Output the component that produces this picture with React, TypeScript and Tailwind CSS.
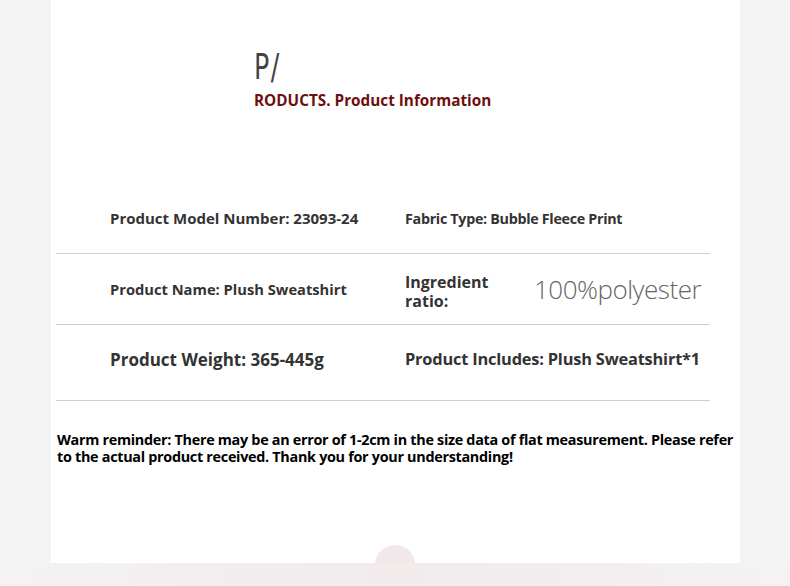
import React from "react";

const rowText = "font-bold text-[#333333]";

export default function App() {
  return (
    <div className="relative h-[586px] w-[790px] overflow-hidden bg-gradient-to-r from-[#f5f4f4] via-[#f3eeee] to-[#f5f4f4] font-['Open_Sans',sans-serif]">
      <div className="ml-[51px] h-[563px] w-[689px] bg-white">
        {/* heading */}
        <div className="pl-[203px] pt-[47px]">
          <div className="origin-left font-['DejaVu_Sans_Condensed',sans-serif] text-[36px] leading-[40px] tracking-[2px] text-[#444444] [transform:scaleX(0.78)]">
            P/
          </div>
          <div className="mt-[3px] text-[15.3px] font-bold leading-[20px] text-[#6e0f0f]">
            RODUCTS. Product Information
          </div>
        </div>

        {/* info table */}
        <div className="mt-[74px] w-[659px]">
          <div className="ml-[5px] flex h-[70px] items-center border-b border-[#cfcfcf]">
            <div className={`w-[349px] shrink-0 pl-[54px] text-[15px] ${rowText}`}>
              Product Model Number: 23093-24
            </div>
            <div className={`text-[14.3px] tracking-[-0.3px] ${rowText}`}>
              Fabric Type: Bubble Fleece Print
            </div>
          </div>
          <div className="ml-[5px] flex h-[71px] items-center border-b border-[#cfcfcf]">
            <div className={`w-[349px] shrink-0 pl-[54px] text-[14.7px] ${rowText}`}>
              Product Name: Plush Sweatshirt
            </div>
            <div className={`mt-[6px] w-[129px] shrink-0 text-[16px] leading-[19px] ${rowText}`}>
              Ingredient
              <br />
              ratio:
            </div>
            <div className="text-[26px] font-light leading-[30px] tracking-[-0.5px] text-[#666666]">
              100%polyester
            </div>
          </div>
          <div className="ml-[5px] flex h-[76px] items-center border-b border-[#cfcfcf] pb-[6px]">
            <div className={`w-[349px] shrink-0 pl-[54px] text-[17px] ${rowText}`}>
              Product Weight: 365-445g
            </div>
            <div className={`text-[16.4px] tracking-[-0.2px] ${rowText}`}>
              Product Includes: Plush Sweatshirt*1
            </div>
          </div>
        </div>

        {/* reminder */}
        <p className="ml-[6px] mt-[30px] w-[680px] text-[14.4px] font-bold leading-[17px] tracking-[-0.3px] text-black">
          Warm reminder: There may be an error of 1-2cm in the size data of flat measurement. Please refer to the actual product received. Thank you for your understanding!
        </p>
      </div>

      {/* bottom bump */}
      <div className="absolute left-[375px] top-[545px] h-[40px] w-[40px] rounded-full bg-[#f1e9e9]" />
      <div className="absolute left-0 top-[563px] h-[23px] w-[790px] bg-gradient-to-r from-[#f4f2f2] via-[#f1ebeb] to-[#f4f2f2]" />
    </div>
  );
}
